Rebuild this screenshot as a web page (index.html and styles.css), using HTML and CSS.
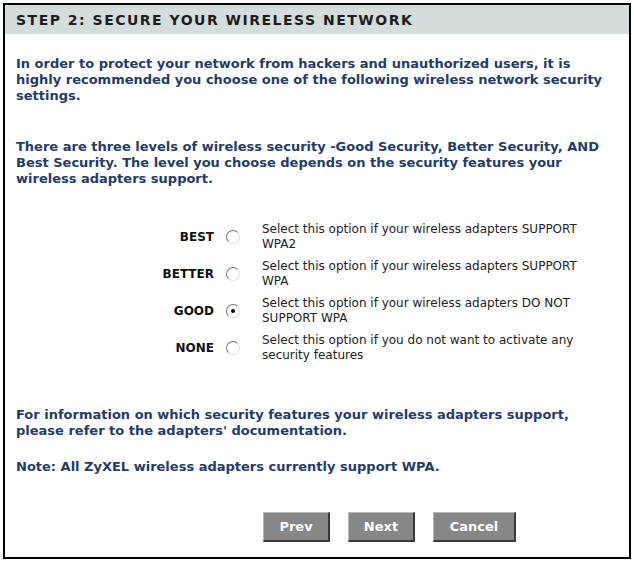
FILE: index.html
```html
<!DOCTYPE html>
<html>
<head>
<meta charset="utf-8">
<link rel="stylesheet" href="styles.css">
</head>
<body>
<div class="panel">
  <div class="header">STEP 2: SECURE YOUR WIRELESS NETWORK</div>
  <div class="content">
    <p class="intro first">In order to protect your network from hackers and unauthorized users, it is highly recommended you choose one of the following wireless network security settings.</p>
    <p class="intro second">There are three levels of wireless security -Good Security, Better Security, AND Best Security. The level you choose depends on the security features your wireless adapters support.</p>
    <div class="options">
      <div class="opt">
        <span class="lbl">BEST</span>
        <span class="radio"></span>
        <span class="desc">Select this option if your wireless adapters SUPPORT WPA2</span>
      </div>
      <div class="opt">
        <span class="lbl">BETTER</span>
        <span class="radio"></span>
        <span class="desc">Select this option if your wireless adapters SUPPORT WPA</span>
      </div>
      <div class="opt">
        <span class="lbl">GOOD</span>
        <span class="radio checked"></span>
        <span class="desc">Select this option if your wireless adapters DO NOT SUPPORT WPA</span>
      </div>
      <div class="opt">
        <span class="lbl">NONE</span>
        <span class="radio"></span>
        <span class="desc">Select this option if you do not want to activate any security features</span>
      </div>
    </div>
    <p class="intro info">For information on which security features your wireless adapters support, please refer to the adapters' documentation.</p>
    <p class="intro note">Note: All ZyXEL wireless adapters currently support WPA.</p>
    <div class="buttons">
      <span class="btn prev">Prev</span>
      <span class="btn next">Next</span>
      <span class="btn cancel">Cancel</span>
    </div>
  </div>
</div>
</body>
</html>
```
FILE: styles.css
```css
html, body {
  margin: 0;
  padding: 0;
  background: #ffffff;
}
.panel {
  margin: 3px;
  border: 2px solid #000;
  box-sizing: content-box;
  width: 624px;
  height: 552px;
  display: flex;
  flex-direction: column;
}
.header {
  background: #d5dcdc;
  height: 29px;
  line-height: 30px;
  padding-left: 11px;
  font-family: "DejaVu Sans", sans-serif;
  font-weight: bold;
  font-size: 14px;
  letter-spacing: 1.5px;
  color: #1c1c1c;
}
.content {
  padding: 0 14px 0 11px;
  flex: 1;
  display: flex;
  flex-direction: column;
}
.intro {
  font-family: "DejaVu Sans", sans-serif;
  font-weight: bold;
  font-size: 13px;
  line-height: 16px;
  color: #243c68;
  margin: 0;
}
.first { margin-top: 22px; }
.second { margin-top: 35px; }
.options {
  margin-top: 35px;
  display: flex;
  flex-direction: column;
  gap: 7px;
}
.opt {
  display: grid;
  grid-template-columns: 198px 48px 345px;
  align-items: center;
}
.lbl {
  text-align: right;
  font-family: "DejaVu Sans", sans-serif;
  font-weight: bold;
  font-size: 12px;
  color: #111;
}
.radio {
  justify-self: start;
  margin-left: 12px;
  width: 12px;
  height: 12px;
  border-radius: 50%;
  border: 1px solid;
  border-color: #7a7a7a #e0e0e0 #e0e0e0 #7a7a7a;
  background: #fff;
  position: relative;
}
.radio.checked::after {
  content: "";
  position: absolute;
  left: 4px;
  top: 4px;
  width: 4px;
  height: 4px;
  border-radius: 50%;
  background: #000;
}
.desc {
  font-family: "DejaVu Sans", sans-serif;
  font-size: 12px;
  line-height: 15px;
  color: #222;
}
.info { margin-top: 44px; }
.note { margin-top: 20px; }
.buttons {
  margin-top: 37px;
  display: flex;
  gap: 18px;
  padding-left: 247px;
}
.btn {
  display: inline-block;
  background: #878787;
  color: #fff;
  font-family: "DejaVu Sans", sans-serif;
  font-weight: bold;
  font-size: 13px;
  height: 27px;
  line-height: 27px;
  text-align: center;
  border-top: 1px solid #b8b8b8;
  border-left: 1px solid #b8b8b8;
  border-right: 2px solid #3a3a3a;
  border-bottom: 2px solid #3a3a3a;
}
.prev, .next { width: 64px; }
.cancel { width: 80px; }
```
